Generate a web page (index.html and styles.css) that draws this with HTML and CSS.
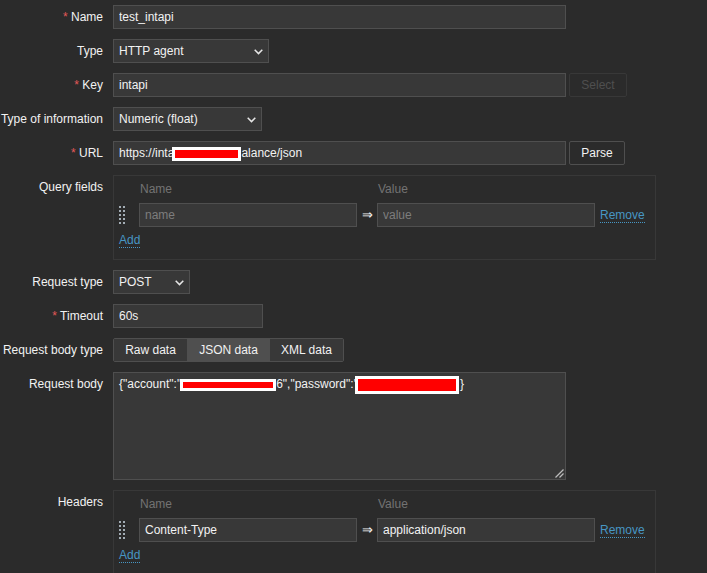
FILE: index.html
```html
<!DOCTYPE html>
<html lang="en">
<head>
<meta charset="utf-8">
<title>Item</title>
<link rel="stylesheet" href="styles.css">
</head>
<body>
<div class="form">
  <label class="lbl"><span class="req">*</span> Name</label>
  <div class="fld"><input class="tb w-full" value="test_intapi"></div>

  <label class="lbl">Type</label>
  <div class="fld"><div class="sel w-type"><span>HTTP agent</span><svg class="chev" width="9" height="6" viewBox="0 0 9 6"><path d="M0.7 0.8 L4.5 4.6 L8.3 0.8" fill="none" stroke="#e6e6e6" stroke-width="1.5"/></svg></div></div>

  <label class="lbl"><span class="req">*</span> Key</label>
  <div class="fld inline"><input class="tb w-full" value="intapi"><button class="btn btn-dis w-select">Select</button></div>

  <label class="lbl">Type of information</label>
  <div class="fld"><div class="sel w-info"><span>Numeric (float)</span><svg class="chev" width="9" height="6" viewBox="0 0 9 6"><path d="M0.7 0.8 L4.5 4.6 L8.3 0.8" fill="none" stroke="#e6e6e6" stroke-width="1.5"/></svg></div></div>

  <label class="lbl"><span class="req">*</span> URL</label>
  <div class="fld inline"><div class="tb w-full">https://inta<span class="redact r-url"><span class="bar"></span></span>alance/json</div><button class="btn w-parse">Parse</button></div>

  <label class="lbl">Query fields</label>
  <div class="fld">
    <div class="dyn">
      <div class="dyn-grid">
        <div></div><div class="th">Name</div><div></div><div class="th">Value</div><div></div>
        <div class="handle"><svg width="6" height="18" viewBox="0 0 6 18"><g fill="#a3adb5"><rect x="0" y="0" width="2" height="2"/><rect x="4" y="0" width="2" height="2"/><rect x="0" y="4" width="2" height="2"/><rect x="4" y="4" width="2" height="2"/><rect x="0" y="8" width="2" height="2"/><rect x="4" y="8" width="2" height="2"/><rect x="0" y="12" width="2" height="2"/><rect x="4" y="12" width="2" height="2"/><rect x="0" y="16" width="2" height="2"/><rect x="4" y="16" width="2" height="2"/></g></svg></div>
        <input class="tb" placeholder="name">
        <div class="arrow">&rArr;</div>
        <input class="tb" placeholder="value">
        <div class="rm"><a class="link">Remove</a></div>
        <div class="add"><a class="link">Add</a></div>
      </div>
    </div>
  </div>

  <label class="lbl">Request type</label>
  <div class="fld"><div class="sel w-req"><span>POST</span><svg class="chev" width="9" height="6" viewBox="0 0 9 6"><path d="M0.7 0.8 L4.5 4.6 L8.3 0.8" fill="none" stroke="#e6e6e6" stroke-width="1.5"/></svg></div></div>

  <label class="lbl"><span class="req">*</span> Timeout</label>
  <div class="fld"><input class="tb w-timeout" value="60s"></div>

  <label class="lbl">Request body type</label>
  <div class="fld"><div class="seg"><span class="seg-item w-raw">Raw data</span><span class="seg-item active w-json">JSON data</span><span class="seg-item w-xml">XML data</span></div></div>

  <label class="lbl">Request body</label>
  <div class="fld"><div class="ta">{"account":"<span class="redact r-acc"><span class="bar"></span></span>6","password":"<span class="redact r-pwd"><span class="bar"></span></span>}<svg class="grip" width="9" height="9" viewBox="0 0 9 9"><path d="M0.5 8.5 L8.5 0.5 M4.5 8.5 L8.5 4.5" stroke="#bdbdbd" stroke-width="1.2" fill="none"/></svg></div></div>

  <label class="lbl">Headers</label>
  <div class="fld">
    <div class="dyn">
      <div class="dyn-grid">
        <div></div><div class="th">Name</div><div></div><div class="th">Value</div><div></div>
        <div class="handle"><svg width="6" height="18" viewBox="0 0 6 18"><g fill="#a3adb5"><rect x="0" y="0" width="2" height="2"/><rect x="4" y="0" width="2" height="2"/><rect x="0" y="4" width="2" height="2"/><rect x="4" y="4" width="2" height="2"/><rect x="0" y="8" width="2" height="2"/><rect x="4" y="8" width="2" height="2"/><rect x="0" y="12" width="2" height="2"/><rect x="4" y="12" width="2" height="2"/><rect x="0" y="16" width="2" height="2"/><rect x="4" y="16" width="2" height="2"/></g></svg></div>
        <input class="tb" value="Content-Type">
        <div class="arrow">&rArr;</div>
        <input class="tb" value="application/json">
        <div class="rm"><a class="link">Remove</a></div>
        <div class="add"><a class="link">Add</a></div>
      </div>
    </div>
  </div>
</div>
</body>
</html>
```

FILE: styles.css
```css
html, body {
  margin: 0;
  padding: 0;
  background: #2b2b2b;
  color: #f2f2f2;
  font-family: "Liberation Sans", Arial, sans-serif;
  font-size: 12px;
  overflow: hidden;
}

.form {
  display: grid;
  grid-template-columns: 103px 1fr;
  column-gap: 10px;
  row-gap: 10px;
  padding-top: 5px;
}

.lbl {
  text-align: right;
  line-height: 24px;
  white-space: nowrap;
  color: #f2f2f2;
}

.req {
  color: #e45959;
}

.fld {
  min-width: 0;
}

.inline {
  display: flex;
  gap: 3px;
}

.tb {
  box-sizing: border-box;
  height: 24px;
  border: 1px solid #4f4f4f;
  background: #383838;
  color: #f2f2f2;
  font-family: "Liberation Sans", Arial, sans-serif;
  font-size: 12px;
  padding: 0 5px;
  margin: 0;
  outline: none;
  line-height: 22px;
  white-space: nowrap;
}

.tb::placeholder {
  color: #7d7d7d;
}

.w-full { width: 453px; }
.w-timeout { width: 150px; }

.sel {
  box-sizing: border-box;
  height: 24px;
  border: 1px solid #4f4f4f;
  background: #383838;
  display: flex;
  align-items: center;
  justify-content: space-between;
  padding: 0 5px 0 5px;
}

.chev { display: block; margin-top: 1px; }

.w-type { width: 156px; }
.w-info { width: 149px; }
.w-req { width: 77px; }

.btn {
  box-sizing: border-box;
  height: 24px;
  border: 1px solid #4f4f4f;
  border-radius: 2px;
  background: #2b2b2b;
  color: #f2f2f2;
  font-family: "Liberation Sans", Arial, sans-serif;
  font-size: 12px;
  padding: 0;
  margin: 0;
}

.btn-dis {
  border-color: #383838;
  color: #4f4f4f;
}

.w-select { width: 58px; }
.w-parse { width: 56px; }

.redact {
  display: inline-block;
  background: #ffffff;
  padding: 3px;
  vertical-align: middle;
}

.redact .bar {
  display: block;
  background: #ff0000;
}

.r-url { margin: -4px 0 -4px -2px; }
.r-url .bar { width: 63px; height: 8px; }

.r-acc { margin: -3px 0 -3px -1px; }
.r-acc .bar { width: 90px; height: 6px; }

.r-pwd { margin: -6px 1px -6px -3px; }
.r-pwd .bar { width: 98px; height: 12px; }

.dyn {
  box-sizing: border-box;
  width: 543px;
  height: 85px;
  border: 1px solid #383838;
  padding: 0 10px 0 5px;
}

.dyn-grid {
  display: grid;
  grid-template-columns: 20px 218px 20px 218px auto;
  grid-auto-rows: auto;
}

.th {
  line-height: 24px;
  color: #737373;
  padding-left: 1px;
  padding-top: 1px;
  margin-bottom: 2px;
}

.dyn-grid .tb {
  width: 218px;
}

.handle {
  display: flex;
  align-items: center;
  height: 24px;
}

.handle svg { display: block; }

.arrow {
  text-align: center;
  line-height: 24px;
  font-size: 13px;
  color: #f2f2f2;
}

.rm {
  line-height: 24px;
  padding-left: 5px;
}

.link {
  color: #4796c4;
  border-bottom: 1px dotted #4796c4;
  cursor: pointer;
}

.add {
  grid-column: 1 / -1;
  margin-top: 6px;
  line-height: 14px;
}

.add .link {
  display: inline-block;
  line-height: 14px;
}

.seg {
  display: inline-flex;
  border: 1px solid #4f4f4f;
  border-radius: 2px;
  overflow: hidden;
}

.seg-item {
  line-height: 22px;
  text-align: center;
  background: #383838;
  color: #f2f2f2;
}

.w-raw { width: 73px; }
.w-json { width: 83px; }
.w-xml { width: 73px; }

.seg-item.active {
  background: #4f4f4f;
}

.ta {
  position: relative;
  box-sizing: border-box;
  width: 453px;
  height: 108px;
  border: 1px solid #4f4f4f;
  background: #383838;
  padding: 4px 5px;
  line-height: 14px;
  white-space: nowrap;
}

.grip {
  position: absolute;
  right: 1px;
  bottom: 1px;
  display: block;
}
```
